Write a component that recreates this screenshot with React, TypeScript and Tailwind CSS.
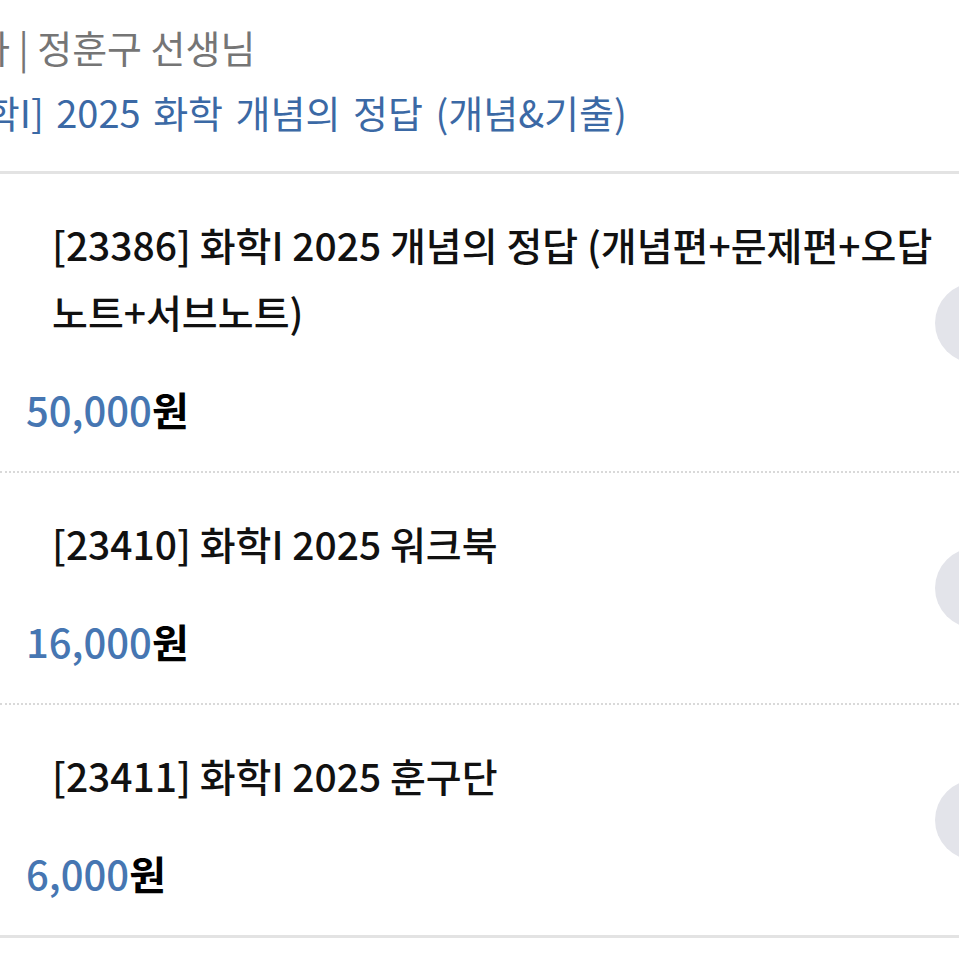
const items = [
  {
    title: "[23386] 화학I 2025 개념의 정답 (개념편+문제편+오답노트+서브노트)",
    price: "50,000",
  },
  { title: "[23410] 화학I 2025 워크북", price: "16,000" },
  { title: "[23411] 화학I 2025 훈구단", price: "6,000" },
];

const font = { fontFamily: '"Noto Sans CJK KR", "Noto Sans", sans-serif' };

export default function App() {
  return (
    <div
      className="relative h-[959px] w-[959px] overflow-hidden bg-white"
      style={font}
    >
      {/* Header */}
      <div className="pt-[25px]">
        <p className="-ml-[60px] whitespace-nowrap text-[38px] leading-[44px] text-[#757575]">
          교사 | 정훈구 선생님
        </p>
        <p className="-ml-[63px] mt-[21px] whitespace-nowrap text-[38px] leading-[44px] text-[#3b69a5] [word-spacing:4px]">
          [화학I] 2025 화학 개념의 정답 (개념&amp;기출)
        </p>
      </div>
      <div className="mt-[37px] h-[3px] bg-[#e3e3e3]" />

      {/* Items */}
      {items.map((item, i) => (
        <div
          key={item.title}
          className={
            i < items.length - 1
              ? "relative border-b-2 border-dotted border-[#d9d9d9] pb-[37px] pt-[37px]"
              : "relative pb-[37px] pt-[37px]"
          }
        >
          <p className="pl-[52px] pr-[24px] text-[39px] font-medium leading-[67px] text-[#111]">
            {item.title}
          </p>
          <p className="mt-[39px] pl-[26px] text-[40px] leading-[50px]">
            <span className="font-medium text-[#4676b2]">{item.price}</span>
            <span className="font-bold text-black">원</span>
          </p>
          <div className="absolute right-[-56px] top-1/2 h-[80px] w-[80px] -translate-y-1/2 rounded-full bg-[#e3e4ea]" />
        </div>
      ))}
      <div className="h-[3px] bg-[#e3e3e3]" />
    </div>
  );
}
